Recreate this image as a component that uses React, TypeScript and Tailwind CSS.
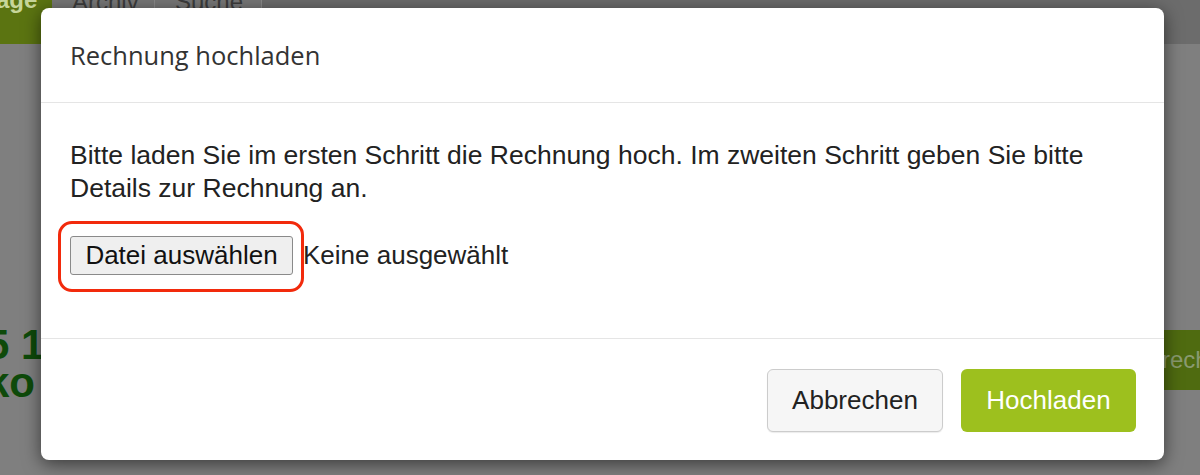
import React from "react";

export default function App() {
  return (
    <div className="relative w-[1200px] h-[475px] overflow-hidden bg-[#7f7f7f]" style={{ fontFamily: '"Liberation Sans", Arial, sans-serif' }}>
      {/* dimmed background page */}
      <div className="absolute inset-x-0 top-0 h-[44px] bg-[#6c6c6c] flex">
        <div className="w-[52px] h-full bg-[#5b7411] text-[#c7d69a] text-[24px] font-bold leading-none overflow-hidden">
          <span className="relative top-[-12px] left-[-4px]">age</span>
        </div>
        <div className="flex h-full bg-[#777777]">
          <div className="w-[103px] border-r border-[#8a8a8a] text-[#3c3c3c] text-[24px] leading-none pl-[20px] overflow-hidden">
            <span className="relative top-[-10px]">Archiv</span>
          </div>
          <div className="w-[107px] border-r border-[#8a8a8a] text-[#3c3c3c] text-[24px] leading-none pl-[20px] overflow-hidden">
            <span className="relative top-[-10px]">Suche</span>
          </div>
        </div>
      </div>
      <div className="absolute left-[-14px] top-[326px] text-[#0e4a0a] text-[42px] font-bold leading-[38px]">
        <div>5 1</div>
        <div>ko</div>
      </div>
      <div className="absolute left-[1150px] top-[330px] w-[80px] h-[60px] bg-[#4f6b10] rounded-[4px] text-[#8a9a70] text-[24px] flex items-center pl-[12px]">
        rech
      </div>

      {/* modal */}
      <div className="absolute left-[41px] top-[8px] w-[1123px] h-[452px] bg-white rounded-[8px] shadow-[0_4px_18px_rgba(0,0,0,0.55)] flex flex-col">
        <div className="h-[95px] border-b border-[#e5e5e5] flex items-center px-[29px]">
          <h4 className="text-[25.5px] text-[#333] font-normal" style={{ fontFamily: '"Open Sans", "Noto Sans", sans-serif' }}>
            Rechnung hochladen
          </h4>
        </div>
        <div className="flex-1 px-[29px] pt-[36px] text-[26.5px] leading-[33px] text-[#222]">
          <p>Bitte laden Sie im ersten Schritt die Rechnung hoch. Im zweiten Schritt geben Sie bitte Details zur Rechnung an.</p>
          <div className="relative mt-[31px] flex items-center text-[26px]">
            <div className="h-[39px] w-[223px] bg-[#efefef] border border-[#8a8a8a] rounded-[3px] flex items-center justify-center text-[#111]">
              Datei auswählen
            </div>
            <span className="ml-[10px] text-[#222]">Keine ausgewählt</span>
            <div className="absolute left-[-12px] top-[-15px] w-[246px] h-[71px] border-[3px] border-[#f22a0c] rounded-[14px]" />
          </div>
        </div>
        <div className="h-[122px] border-t border-[#e5e5e5] flex items-start justify-end gap-[18px] pt-[30px] pr-[28px]">
          <div className="w-[176px] h-[63px] bg-[#f6f6f6] border border-[#cccccc] rounded-[6px] shadow-[0_1px_1px_rgba(0,0,0,0.08)] flex items-center justify-center text-[26px] text-[#222]">
            Abbrechen
          </div>
          <div className="w-[175px] h-[63px] bg-[#9dc01e] rounded-[6px] flex items-center justify-center text-[26px] text-white">
            Hochladen
          </div>
        </div>
      </div>
    </div>
  );
}
